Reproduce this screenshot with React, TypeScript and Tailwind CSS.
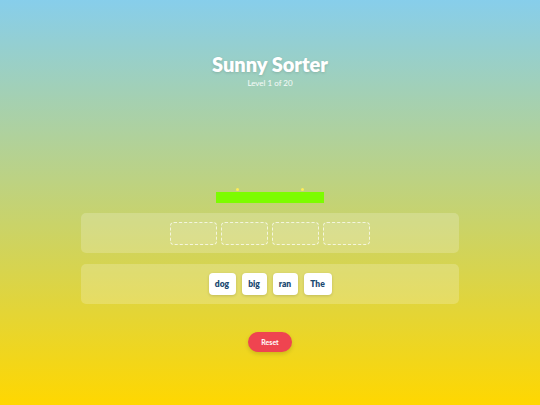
const slots = [0, 1, 2, 3];
const words = [
  { text: "dog", w: "w-[27px]" },
  { text: "big", w: "w-[25px]" },
  { text: "ran", w: "w-[25px]" },
  { text: "The", w: "w-[28px]" },
];

export default function App() {
  return (
    <div className="min-h-[405px] h-[405px] w-full bg-[linear-gradient(to_bottom,#87ceeb,#ffd700)] font-['Lato',sans-serif] flex flex-col items-center">
      <h1 className="mt-[52px] text-[20px] leading-[24px] font-extrabold text-white [text-shadow:0_1px_3px_rgba(0,0,0,0.15)]">
        Sunny Sorter
      </h1>
      <p className="mt-[2px] text-[8px] leading-[10px] text-white/90">Level 1 of 20</p>

      <div className="relative mt-[104px] w-[108px] h-[11px] bg-[#7cfc00]">
        <span className="absolute -top-[4px] left-[20px] w-[3px] h-[3px] rounded-full bg-[#ffee55]" />
        <span className="absolute -top-[4px] left-[85px] w-[3px] h-[3px] rounded-full bg-[#ffee55]" />
      </div>

      <div className="mt-[10px] w-[378px] h-[40px] rounded-[5px] bg-white/20 flex items-center justify-center gap-[4px]">
        {slots.map((s) => (
          <div key={s} className="w-[47px] h-[23px] rounded-[4px] border border-dashed border-white/70 bg-white/10" />
        ))}
      </div>

      <div className="mt-[11px] w-[378px] h-[40px] rounded-[5px] bg-white/20 flex items-center justify-center gap-[6px]">
        {words.map((w) => (
          <div
            key={w.text}
            className={`${w.w} h-[22px] rounded-[4px] bg-white shadow-[0_1px_3px_rgba(0,0,0,0.15)] flex items-center justify-center text-[8.5px] font-extrabold text-[#1b4a72]`}
          >
            {w.text}
          </div>
        ))}
      </div>

      <button className="mt-[28px] w-[44px] h-[20px] rounded-full bg-[#ef4450] text-white text-[7px] font-bold shadow-[0_2px_4px_rgba(0,0,0,0.15)]">
        Reset
      </button>
    </div>
  );
}
